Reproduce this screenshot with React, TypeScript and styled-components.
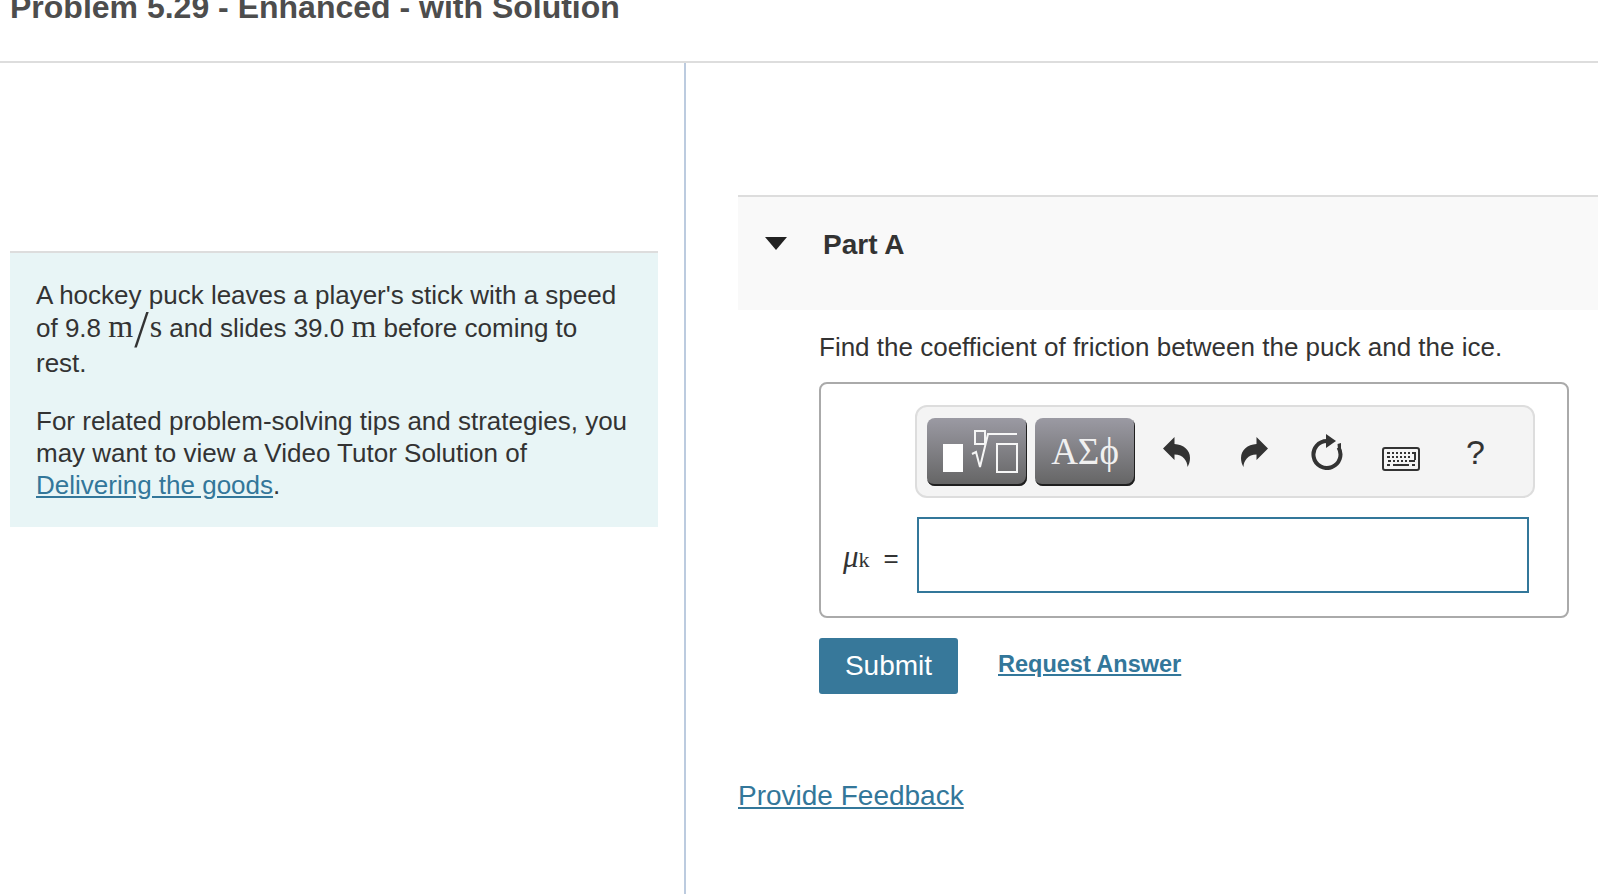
import styled, { createGlobalStyle } from 'styled-components'

const GlobalStyle = createGlobalStyle`
  html, body {
    margin: 0;
    padding: 0;
    height: 894px;
    overflow: hidden;
    background: #fff;
  }
  body {
    font-family: 'Liberation Sans', Arial, sans-serif;
    color: #333;
  }
`

const UndoIcon = ({ flip }: { flip?: boolean }) => (
  <svg
    width="27"
    height="30"
    viewBox="0 0 27 30"
    style={flip ? { transform: 'scaleX(-1)' } : undefined}
  >
    <path
      d="M0 11.5 L11.5 0 V7 C20.5 7.5 27 13 27 21 C27 24.5 26 27.5 24.5 30 C24.5 24 20 17.5 11.5 17.5 V23 Z"
      fill="#333"
    />
  </svg>
)

const ResetIcon = () => (
  <svg width="32" height="36" viewBox="0 0 32 36">
    <path
      d="M16 7 A13.5 13.5 0 1 0 27.5 13.5"
      fill="none"
      stroke="#333"
      strokeWidth="4"
    />
    <path d="M15 0 L25 7 L15 14 Z" fill="#333" />
    <path d="M26.5 10 L30 9 L30 15 L27 15 Z" fill="#333" />
  </svg>
)

const KeyboardIcon = () => (
  <svg width="38" height="24" viewBox="0 0 38 24">
    <rect x="1" y="1" width="36" height="22" rx="2" fill="#f4f4f4" stroke="#333" strokeWidth="2" />
    <path
      d="M5 6 H8 M10 6 H12 M14 6 H16 M18 6 H20 M22 6 H24 M26 6 H28 M30 6 H33 V13 M5 10 H8 M10 10 H12 M14 10 H16 M18 10 H20 M22 10 H24 M26 10 H28 M6 14 H9 M11 14 H13 M15 14 H17 M19 14 H21 M23 14 H25 M27 14 H33 M5 18 H8 M11 18 H27 M30 18 H33"
      fill="none"
      stroke="#333"
      strokeWidth="2"
    />
  </svg>
)

const TemplatesGlyph = () => (
  <svg width="100" height="68" viewBox="0 0 100 68">
    <rect x="16" y="26" width="20" height="28" fill="#fff" />
    <g fill="none" stroke="#f6f6f6" strokeWidth="2">
      <rect x="48" y="13" width="10" height="13" />
      <path d="M45 36 L49 34 L53 49 L61 16 H90" />
      <rect x="70" y="26" width="20" height="28" />
    </g>
  </svg>
)

const App = () => {
  return (
    <Page>
      <GlobalStyle />
      <Header>
        <Title>Problem 5.29 - Enhanced - with Solution</Title>
      </Header>
      <Columns>
        <LeftColumn>
          <Intro>
            <Para>
              A hockey puck leaves a player's stick with a speed of 9.8{' '}
              <MathText>
                m<Slash>/</Slash>s
              </MathText>{' '}
              and slides 39.0 <MathText>m</MathText> before coming to rest.
            </Para>
            <Para>
              For related problem-solving tips and strategies, you may want to
              view a Video Tutor Solution of <TextLink href="#">Delivering the goods</TextLink>.
            </Para>
          </Intro>
        </LeftColumn>
        <RightColumn>
          <PartHeader>
            <Caret />
            <PartTitle>Part A</PartTitle>
          </PartHeader>
          <PartBody>
            <Question>Find the coefficient of friction between the puck and the ice.</Question>
            <AnswerBox>
              <Toolbar>
                <ToolButton>
                  <TemplatesGlyph />
                </ToolButton>
                <ToolButton>
                  <Symbols>ΑΣϕ</Symbols>
                </ToolButton>
                <PlainTool $width={27} $left={28}>
                  <UndoIcon />
                </PlainTool>
                <PlainTool $width={27} $left={51}>
                  <UndoIcon flip />
                </PlainTool>
                <PlainTool $width={32} $left={43}>
                  <ResetIcon />
                </PlainTool>
                <PlainTool $width={38} $left={39} $drop={14}>
                  <KeyboardIcon />
                </PlainTool>
                <PlainTool $width={17} $left={47}>
                  <Help>?</Help>
                </PlainTool>
              </Toolbar>
              <AnswerRow>
                <Symbol>
                  <Mu>μ</Mu>
                  <Sub>k</Sub>
                  <Equals>=</Equals>
                </Symbol>
                <AnswerInput type="text" />
              </AnswerRow>
            </AnswerBox>
            <Actions>
              <SubmitButton>Submit</SubmitButton>
              <RequestLink href="#">Request Answer</RequestLink>
            </Actions>
          </PartBody>
          <Feedback href="#">Provide Feedback</Feedback>
        </RightColumn>
      </Columns>
    </Page>
  )
}

export default App

const Page = styled.div`
  width: 1598px;
  height: 894px;
  overflow: hidden;
`

const Header = styled.header`
  height: 61px;
  border-bottom: 2px solid #ddd;
  overflow: hidden;
`

const Title = styled.h1`
  margin: -12px 0 0 10px;
  font-size: 32px;
  line-height: 38px;
  font-weight: 700;
  color: #4d4d4d;
`

const Columns = styled.div`
  display: flex;
  height: 831px;
`

const LeftColumn = styled.div`
  width: 686px;
  flex: none;
  padding: 188px 0 0 10px;
  box-sizing: border-box;
  border-right: 2px solid #bccbdf;
`

const Intro = styled.section`
  width: 648px;
  height: 276px;
  box-sizing: border-box;
  padding: 26px 30px 0 26px;
  background: #e8f5f6;
  border-top: 2px solid #ddd;
`

const Para = styled.p`
  margin: 0 0 26px;
  font-size: 26px;
  line-height: 32px;
  color: #333;
`

const MathText = styled.span`
  font-family: 'Liberation Serif', 'DejaVu Serif', serif;
  font-size: 32px;
  line-height: 30px;
`

const Slash = styled.span`
  display: inline-block;
  font-size: 52px;
  line-height: 26px;
  font-weight: 400;
  margin: 0 1px 4px;
  vertical-align: -10px;
`

const TextLink = styled.a`
  color: #33779a;
  text-decoration: underline;
`

const RightColumn = styled.div`
  flex: 1;
  min-width: 0;
  padding: 132px 0 0 52px;
`

const PartHeader = styled.div`
  height: 115px;
  border-top: 2px solid #ddd;
  background: #f9f9f9;
  display: flex;
  align-items: center;
  padding: 0 0 17px 27px;
  box-sizing: border-box;
`

const Caret = styled.span`
  width: 0;
  height: 0;
  border-left: 11px solid transparent;
  border-right: 11px solid transparent;
  border-top: 13px solid #222;
  margin: 0 36px 4px 0;
`

const PartTitle = styled.h2`
  margin: 0;
  font-size: 28px;
  font-weight: 700;
  color: #333;
`

const PartBody = styled.div`
  padding-left: 81px;
`

const Question = styled.p`
  margin: 21px 0 19px;
  font-size: 26px;
  line-height: 32px;
`

const AnswerBox = styled.div`
  width: 750px;
  height: 236px;
  box-sizing: border-box;
  border: 2px solid #aaa;
  border-radius: 8px;
  padding: 21px 0 0 94px;
`

const Toolbar = styled.div`
  width: 620px;
  height: 93px;
  box-sizing: border-box;
  background: #f4f4f4;
  border: 2px solid #ddd;
  border-radius: 12px;
  display: flex;
  align-items: center;
  padding-left: 10px;
  gap: 8px;
`

const ToolButton = styled.div`
  width: 100px;
  height: 68px;
  box-sizing: border-box;
  border-radius: 8px;
  background: linear-gradient(#9b9aa3, #646464);
  box-shadow: inset -1px -2px 0 #1f1f1f;
  display: flex;
  align-items: center;
  justify-content: center;
`

const Symbols = styled.span`
  font-family: 'Liberation Serif', 'DejaVu Serif', serif;
  font-size: 37px;
  color: #f0f0f0;
`

const PlainTool = styled.div<{ $width: number; $left: number; $drop?: number }>`
  width: ${(p) => p.$width}px;
  margin-left: ${(p) => p.$left - 8}px;
  margin-top: ${(p) => p.$drop ?? 0}px;
  display: flex;
  justify-content: center;
`

const Help = styled.span`
  font-size: 34px;
  line-height: 36px;
  color: #333;
`

const AnswerRow = styled.div`
  display: flex;
  align-items: center;
  margin-top: 19px;
  margin-left: -72px;
`

const Symbol = styled.div`
  width: 74px;
  flex: none;
  display: flex;
  align-items: baseline;
  padding-top: 3px;
  font-family: 'Liberation Serif', 'DejaVu Serif', serif;
  color: #333;
`

const Mu = styled.i`
  font-size: 31px;
`

const Sub = styled.span`
  font-size: 22px;
`

const Equals = styled.span`
  font-family: 'Liberation Sans', Arial, sans-serif;
  font-size: 26px;
  margin-left: 14px;
`

const AnswerInput = styled.input`
  width: 612px;
  height: 76px;
  box-sizing: border-box;
  border: 2px solid #33779a;
  background: #fff;
  border-radius: 0;
  outline: none;
`

const Actions = styled.div`
  display: flex;
  align-items: flex-start;
  margin-top: 20px;
`

const SubmitButton = styled.button`
  width: 139px;
  height: 56px;
  border: none;
  border-radius: 3px;
  background: #37789a;
  color: #fff;
  font-family: inherit;
  font-size: 28px;
`

const RequestLink = styled.a`
  margin: 13px 0 0 40px;
  font-size: 23.5px;
  font-weight: 700;
  color: #33779a;
  text-decoration: underline;
`

const Feedback = styled.a`
  display: inline-block;
  margin-top: 86px;
  font-size: 28px;
  color: #33779a;
  text-decoration: underline;
`
